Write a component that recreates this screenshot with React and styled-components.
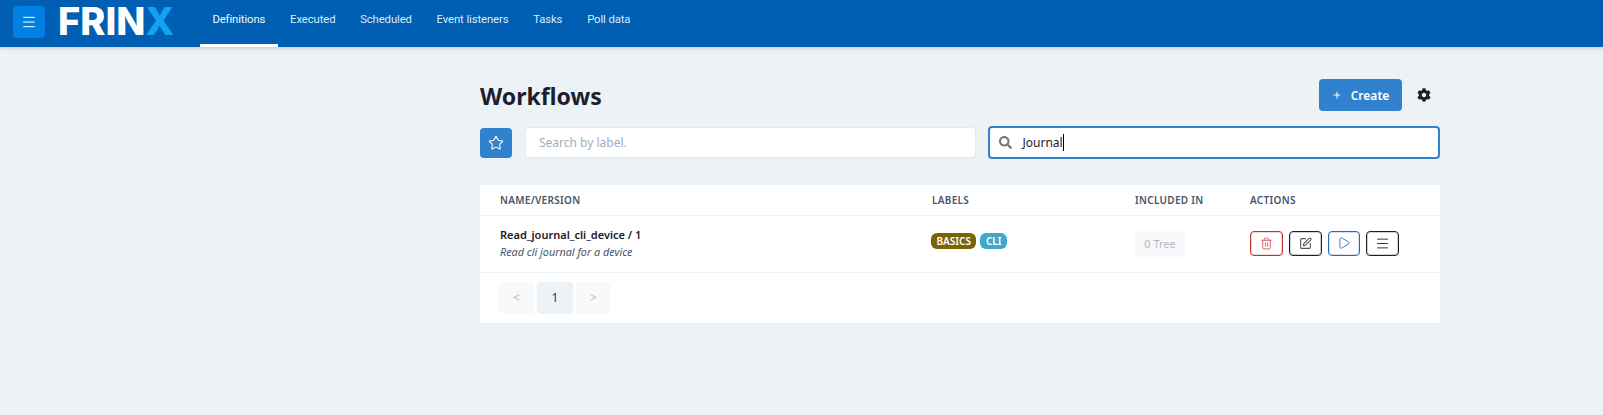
import React from 'react';
import styled, { createGlobalStyle } from 'styled-components';
import { Menu, Plus, Star, Trash2, SquarePen, Play } from 'lucide-react';
import { FaSearch, FaCog } from 'react-icons/fa';

const tabs = ['Definitions', 'Executed', 'Scheduled', 'Event listeners', 'Tasks', 'Poll data'];

const App = () => {
  return (
    <>
      <GlobalStyle />
      <Header>
        <MenuButton>
          <Menu size={16} strokeWidth={1.5} />
        </MenuButton>
        <Logo>
          FRIN<LogoX>X</LogoX>
        </Logo>
        <Tabs>
          {tabs.map((tab, i) => (
            <Tab key={tab} $active={i === 0}>
              {tab}
            </Tab>
          ))}
        </Tabs>
      </Header>
      <Main>
        <TitleRow>
          <Title>Workflows</Title>
          <CreateButton>
            <Plus size={10} strokeWidth={2.5} />
            Create
          </CreateButton>
          <GearButton>
            <FaCog size={14} />
          </GearButton>
        </TitleRow>
        <SearchRow>
          <StarButton>
            <Star size={16} strokeWidth={1.6} />
          </StarButton>
          <LabelInput placeholder="Search by label." readOnly />
          <SearchBox>
            <FaSearch size={13} color="#777" />
            <SearchText>Journal</SearchText>
          </SearchBox>
        </SearchRow>
        <Panel>
          <Table>
            <thead>
              <tr>
                <Th $width="432px">Name/Version</Th>
                <Th $width="203px">Labels</Th>
                <Th $width="115px">Included in</Th>
                <Th>Actions</Th>
              </tr>
            </thead>
            <tbody>
              <tr>
                <Td>
                  <WorkflowName>Read_journal_cli_device / 1</WorkflowName>
                  <WorkflowDesc>Read cli journal for a device</WorkflowDesc>
                </Td>
                <Td>
                  <Labels>
                    <Badge $bg="#7a6408">BASICS</Badge>
                    <Badge $bg="#41a8cc">CLI</Badge>
                  </Labels>
                </Td>
                <Td>
                  <TreeButton>0 Tree</TreeButton>
                </Td>
                <Td>
                  <Actions>
                    <ActionButton $color="#c53030" $width="33px">
                      <Trash2 size={13} color="#e0626a" strokeWidth={1.8} />
                    </ActionButton>
                    <ActionButton $color="#1a202c" $width="33px">
                      <SquarePen size={13} color="#555" strokeWidth={2} />
                    </ActionButton>
                    <ActionButton $color="#2b6cb0" $width="32px">
                      <Play size={14} color="#2b6cb0" strokeWidth={1.5} />
                    </ActionButton>
                    <ActionButton $color="#1a202c" $width="33px">
                      <Menu size={15} color="#333" strokeWidth={1.6} />
                    </ActionButton>
                  </Actions>
                </Td>
              </tr>
            </tbody>
          </Table>
          <Pagination>
            <PageButton>&lt;</PageButton>
            <PageButton $current>1</PageButton>
            <PageButton>&gt;</PageButton>
          </Pagination>
        </Panel>
      </Main>
    </>
  );
};

export default App;

const GlobalStyle = createGlobalStyle`
  html, body {
    margin: 0;
    height: 100%;
    background: #edf2f7;
    overflow: hidden;
    font-family: "Noto Sans", "Open Sans", sans-serif;
    color: #1a202c;
  }
`;

const Header = styled.header`
  height: 47px;
  display: flex;
  align-items: stretch;
  background: #005eb3;
  box-shadow: 0 1px 4px rgba(0, 0, 0, 0.2);
`;

const MenuButton = styled.button`
  width: 32px;
  height: 32px;
  margin: 6px 0 0 13px;
  display: flex;
  align-items: center;
  justify-content: center;
  padding: 0;
  border: 0;
  border-radius: 4px;
  background: #0080e2;
  color: #fff;
`;

const Logo = styled.div`
  width: 142px;
  margin-left: 13px;
  font-family: Inter, sans-serif;
  font-size: 38px;
  font-weight: 800;
  line-height: 42px;
  color: #fff;
`;

const LogoX = styled.span`
  color: #10a2f5;
`;

const Tabs = styled.nav`
  display: flex;
`;

const Tab = styled.a`
  padding: 0 12.4px 5px;
  display: flex;
  align-items: center;
  font-family: Roboto, sans-serif;
  font-size: 11.3px;
  letter-spacing: -0.1px;
  color: ${(p) => (p.$active ? '#f4f8fc' : '#d8ecfb')};
  border-bottom: 3px solid ${(p) => (p.$active ? '#fff' : 'transparent')};
  box-sizing: border-box;
  height: 47px;
`;

const Main = styled.main`
  width: 960px;
  margin: 0 0 0 480px;
`;

const TitleRow = styled.div`
  display: flex;
  align-items: center;
  padding-top: 32px;
`;

const Title = styled.h1`
  flex: 1;
  margin: 1px 0 -1px;
  font-size: 23px;
  font-weight: 700;
  line-height: 32px;
`;

const CreateButton = styled.button`
  width: 83px;
  height: 32px;
  display: flex;
  align-items: center;
  justify-content: center;
  gap: 9px;
  padding: 0;
  border: 0;
  border-radius: 4px;
  background: #3182ce;
  color: #fff;
  font: 600 12px "Noto Sans", sans-serif;
`;

const GearButton = styled.button`
  width: 32px;
  height: 32px;
  margin-left: 6px;
  display: flex;
  align-items: center;
  justify-content: center;
  padding: 0;
  border: 0;
  background: transparent;
  color: #1a202c;
`;

const SearchRow = styled.div`
  display: flex;
  align-items: center;
  gap: 13px;
  margin-top: 15px;
`;

const StarButton = styled.button`
  flex: none;
  width: 32px;
  height: 30px;
  display: flex;
  align-items: center;
  justify-content: center;
  padding: 0;
  border: 0;
  border-radius: 4px;
  background: #3182ce;
  color: #fff;
`;

const LabelInput = styled.input`
  width: 451px;
  height: 31px;
  margin-right: -1px;
  box-sizing: border-box;
  padding: 0 13px;
  border: 1px solid #e2e8f0;
  border-radius: 4px;
  outline: none;
  background: #fff;
  font: 12px "Noto Sans", sans-serif;

  &::placeholder {
    color: #a0aec0;
  }
`;

const SearchBox = styled.div`
  width: 453px;
  height: 33px;
  box-sizing: border-box;
  display: flex;
  align-items: center;
  gap: 11px;
  padding: 0 9px;
  border: 2px solid #3182ce;
  border-radius: 4px;
  background: #fff;
`;

const SearchText = styled.span`
  font-size: 12px;
  line-height: 17px;
  color: #1a202c;
  border-right: 1px solid #000;
`;

const Panel = styled.section`
  margin-top: 26px;
  height: 138px;
  background: #fff;
`;

const Table = styled.table`
  width: 100%;
  border-collapse: collapse;
  table-layout: fixed;
`;

const Th = styled.th`
  width: ${(p) => p.$width || 'auto'};
  height: 30px;
  padding: 0 0 0 20px;
  box-sizing: border-box;
  border-bottom: 1px solid #edf2f7;
  text-align: left;
  font-size: 10px;
  font-weight: 600;
  letter-spacing: 0.03em;
  text-transform: uppercase;
  color: #4a5568;
`;

const Td = styled.td`
  height: 57px;
  padding: 0 0 0 20px;
  box-sizing: border-box;
  border-bottom: 1px solid #edf2f7;
  vertical-align: middle;
`;

const WorkflowName = styled.div`
  margin-top: -1px;
  font-size: 11px;
  font-weight: 600;
  line-height: 17px;
  color: #1a202c;
`;

const WorkflowDesc = styled.div`
  font-size: 10.8px;
  font-style: italic;
  line-height: 17px;
  color: #4a5568;
`;

const Labels = styled.div`
  display: flex;
  gap: 4px;
  margin: -5px 0 0 -1px;
`;

const Badge = styled.span`
  height: 16px;
  padding: 0 5.5px;
  display: flex;
  align-items: center;
  border-radius: 6px;
  background: ${(p) => p.$bg};
  color: #fff;
  font-size: 10px;
  font-weight: 600;
`;

const TreeButton = styled.button`
  display: block;
  width: 50px;
  height: 26px;
  padding: 0;
  border: 0;
  border-radius: 4px;
  background: #f7f9fb;
  color: #b3b8c0;
  font: 11px "Noto Sans", sans-serif;
`;

const Actions = styled.div`
  display: flex;
  align-items: flex-start;
  height: 26px;
  gap: 6px;
`;

const ActionButton = styled.button`
  width: ${(p) => p.$width};
  height: 25px;
  box-sizing: border-box;
  display: flex;
  align-items: center;
  justify-content: center;
  padding: 0;
  border: 1px solid ${(p) => p.$color};
  box-shadow: inset 0 0 0 1px ${(p) => p.$color}33;
  border-radius: 4px;
  background: #fff;
`;

const Pagination = styled.div`
  display: flex;
  gap: 3px;
  padding: 9px 0 0 19px;
`;

const PageButton = styled.button`
  width: ${(p) => (p.$current ? '36px' : '35px')};
  height: 32px;
  padding: 0;
  border: 0;
  border-radius: 4px;
  background: ${(p) => (p.$current ? '#edf2f7' : '#f7f9fb')};
  color: ${(p) => (p.$current ? '#2d3748' : '#b3b8c0')};
  font: 12px "Noto Sans", sans-serif;
`;
